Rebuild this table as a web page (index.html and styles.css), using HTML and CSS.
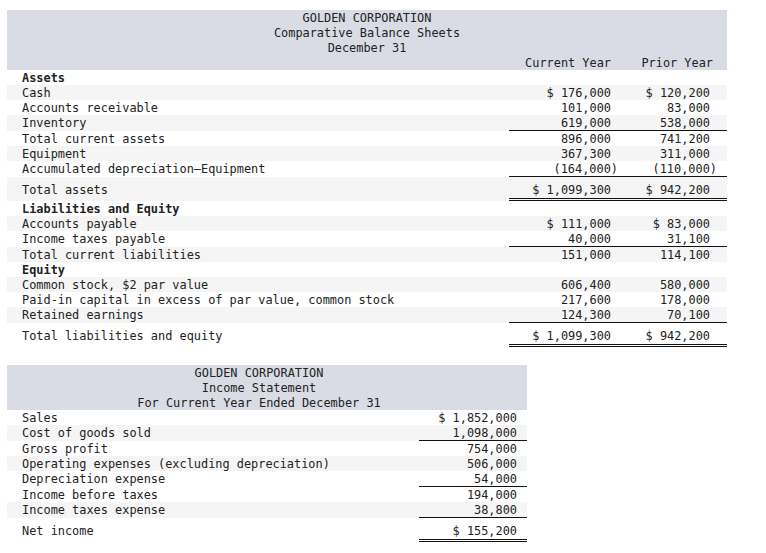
FILE: index.html
```html
<!DOCTYPE html>
<html lang="en">
<head>
<meta charset="utf-8">
<title>Golden Corporation</title>
<link rel="stylesheet" href="styles.css">
</head>
<body>
<div class="page">
  <section class="sheet bs">
    <div class="band">
      <div class="title">GOLDEN CORPORATION</div>
      <div class="title">Comparative Balance Sheets</div>
      <div class="title">December 31</div>
      <div class="row head">
        <div class="lbl"></div>
        <div class="num cur">Current Year</div>
        <div class="num pri">Prior Year</div>
      </div>
    </div>
    <div class="row"><div class="lbl b">Assets</div><div class="num cur"></div><div class="num pri"></div></div>
    <div class="row alt"><div class="lbl">Cash</div><div class="num cur">$ 176,000</div><div class="num pri">$ 120,200</div></div>
    <div class="row"><div class="lbl">Accounts receivable</div><div class="num cur">101,000</div><div class="num pri">83,000</div></div>
    <div class="row alt"><div class="lbl">Inventory</div><div class="num cur ul">619,000</div><div class="num pri ul">538,000</div></div>
    <div class="row"><div class="lbl">Total current assets</div><div class="num cur">896,000</div><div class="num pri">741,200</div></div>
    <div class="row alt"><div class="lbl">Equipment</div><div class="num cur">367,300</div><div class="num pri">311,000</div></div>
    <div class="row"><div class="lbl">Accumulated depreciation&#8212;Equipment</div><div class="num cur ul">(164,000<span class="paren">)</span></div><div class="num pri ul">(110,000<span class="paren">)</span></div></div>
    <div class="row alt total"><div class="lbl">Total assets</div><div class="num cur dbl">$ 1,099,300</div><div class="num pri dbl">$ 942,200</div></div>
    <div class="row"><div class="lbl b">Liabilities and Equity</div><div class="num cur"></div><div class="num pri"></div></div>
    <div class="row alt"><div class="lbl">Accounts payable</div><div class="num cur">$ 111,000</div><div class="num pri">$ 83,000</div></div>
    <div class="row"><div class="lbl">Income taxes payable</div><div class="num cur ul">40,000</div><div class="num pri ul">31,100</div></div>
    <div class="row alt"><div class="lbl">Total current liabilities</div><div class="num cur">151,000</div><div class="num pri">114,100</div></div>
    <div class="row"><div class="lbl b">Equity</div><div class="num cur"></div><div class="num pri"></div></div>
    <div class="row alt"><div class="lbl">Common stock, $2 par value</div><div class="num cur">606,400</div><div class="num pri">580,000</div></div>
    <div class="row"><div class="lbl">Paid-in capital in excess of par value, common stock</div><div class="num cur">217,600</div><div class="num pri">178,000</div></div>
    <div class="row alt"><div class="lbl">Retained earnings</div><div class="num cur ul">124,300</div><div class="num pri ul">70,100</div></div>
    <div class="row total"><div class="lbl">Total liabilities and equity</div><div class="num cur dbl">$ 1,099,300</div><div class="num pri dbl">$ 942,200</div></div>
  </section>

  <section class="sheet is">
    <div class="band">
      <div class="title">GOLDEN CORPORATION</div>
      <div class="title">Income Statement</div>
      <div class="title">For Current Year Ended December 31</div>
    </div>
    <div class="row"><div class="lbl">Sales</div><div class="num amt">$ 1,852,000</div></div>
    <div class="row alt"><div class="lbl">Cost of goods sold</div><div class="num amt ul">1,098,000</div></div>
    <div class="row"><div class="lbl">Gross profit</div><div class="num amt">754,000</div></div>
    <div class="row alt"><div class="lbl">Operating expenses (excluding depreciation)</div><div class="num amt">506,000</div></div>
    <div class="row"><div class="lbl">Depreciation expense</div><div class="num amt ul">54,000</div></div>
    <div class="row"><div class="lbl">Income before taxes</div><div class="num amt">194,000</div></div>
    <div class="row alt"><div class="lbl">Income taxes expense</div><div class="num amt ul">38,800</div></div>
    <div class="row total"><div class="lbl">Net income</div><div class="num amt dbl">$ 155,200</div></div>
  </section>
</div>
</body>
</html>
```

FILE: styles.css
```css
html, body {
  margin: 0;
  padding: 0;
  background: #ffffff;
}

.page {
  padding: 10px 0 0 7px;
  display: flex;
  flex-direction: column;
  gap: 18px;
  font-family: "DejaVu Sans Mono", "Liberation Mono", monospace;
  font-size: 11.9px;
  line-height: 14px;
  color: #222222;
}

.sheet {
  display: flex;
  flex-direction: column;
}

.bs { width: 720px; }
.is { width: 520px; }

.band {
  background: #d9dce5;
}

.title {
  text-align: center;
  white-space: pre;
  padding-top: 1px;
}

.is .band .title {
  padding-right: 16px;
}

.row {
  display: flex;
}

.row.alt {
  background: #f5f5f5;
}

.lbl {
  flex: 1;
  padding-left: 15px;
  padding-top: 1px;
  white-space: pre;
}

.lbl.b {
  font-weight: bold;
}

.num {
  text-align: right;
  white-space: pre;
  padding-top: 1px;
}

.bs .num.cur {
  width: 109px;
  padding-right: 7px;
  box-sizing: border-box;
}

.bs .num.pri {
  width: 109px;
  padding-right: 17px;
  box-sizing: border-box;
}

.bs .head .num.pri {
  padding-right: 14px;
}

.is .num.amt {
  width: 108px;
  padding-right: 10px;
  box-sizing: border-box;
}

.num.ul {
  border-bottom: 1px solid #111111;
}

.total .lbl,
.total .num {
  padding-top: 6px;
  padding-bottom: 1px;
}

.num.dbl {
  border-bottom: 3px double #111111;
}

.paren {
  margin-right: -7px;
}
```
